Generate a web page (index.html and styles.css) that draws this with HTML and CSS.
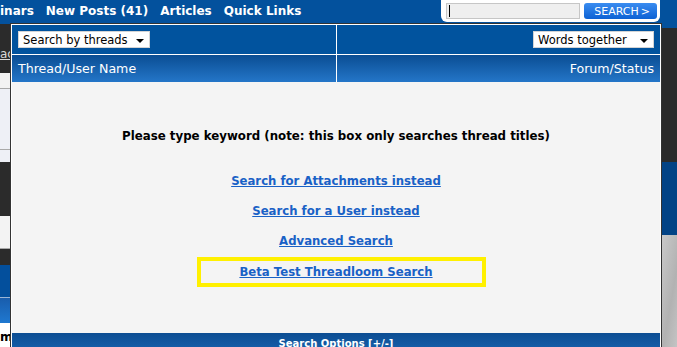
FILE: index.html
```html
<!DOCTYPE html>
<html>
<head>
<meta charset="utf-8">
<link rel="stylesheet" href="styles.css">
</head>
<body>
<header class="topbar">
  <nav class="nav">
    <a class="nav-link">inars</a>
    <a class="nav-link">New Posts (41)</a>
    <a class="nav-link">Articles</a>
    <a class="nav-link">Quick Links</a>
  </nav>
  <form class="quick-search">
    <div class="qs-input"><span class="caret"></span></div>
    <button class="qs-button" type="button"><span>SEARCH</span><span>&gt;</span></button>
  </form>
</header>

<div class="page">
  <div class="strip-left">
    <div class="blk dark tall1"><span class="cut-link">ac</span></div>
    <div class="blk light h15 line"></div>
    <div class="blk pale h60 line"></div>
    <div class="blk pale h12"></div>
    <div class="blk dark h54"></div>
    <div class="blk light h32 line"></div>
    <div class="blk dark h15"></div>
    <div class="blk blue h32 line-light"></div>
    <div class="blk bluegrad h25"></div>
    <div class="blk white h25"><span class="cut-bold">m</span></div>
  </div>
  <div class="page-mid"></div>
  <div class="strip-right">
    <div class="rblk r-blue1"></div>
    <div class="rblk r-dark"></div>
    <div class="rblk r-blue2"></div>
    <div class="rblk r-grey"></div>
  </div>
</div>

<div class="search-popup">
  <div class="popup-grid">
    <div class="cell opt-cell">
      <div class="fake-select sel-left"><span>Search by threads</span><i class="arrow"></i></div>
    </div>
    <div class="cell opt-cell opt-right">
      <div class="fake-select sel-right"><span>Words together</span><i class="arrow"></i></div>
    </div>
    <div class="cell head-cell">Thread/User Name</div>
    <div class="cell head-cell head-right">Forum/Status</div>
    <div class="popup-body">
      <div class="body-inner">
        <p class="hint">Please type keyword (note: this box only searches thread titles)</p>
        <div class="links">
          <a class="plink" href="#">Search for Attachments instead</a>
          <a class="plink" href="#">Search for a User instead</a>
          <a class="plink" href="#">Advanced Search</a>
          <div class="beta-box"><a class="plink" href="#">Beta Test Threadloom Search</a></div>
        </div>
      </div>
      <div class="options-bar">Search Options [+/-]</div>
    </div>
  </div>
</div>
</body>
</html>
```

FILE: styles.css
```css
html, body {
  margin: 0;
  padding: 0;
}
body {
  width: 677px;
  height: 347px;
  overflow: hidden;
  position: relative;
  font-family: "DejaVu Sans", Verdana, sans-serif;
  background: #f4f4f4;
}

/* top navigation */
.topbar {
  height: 24px;
  background: #03519d;
  display: flex;
  justify-content: space-between;
  align-items: flex-start;
}
.nav {
  display: flex;
  gap: 12px;
  padding-top: 4px;
}
.nav-link {
  color: #fff;
  font-weight: bold;
  font-size: 12px;
  line-height: 14px;
  white-space: nowrap;
}
.quick-search {
  margin: 0 17px 0 0;
  width: 219px;
  height: 22px;
  box-sizing: border-box;
  background: #fff;
  border-radius: 0 0 6px 6px;
  display: flex;
  align-items: center;
  gap: 4px;
  padding: 0 3px 0 5px;
}
.qs-input {
  width: 135px;
  height: 16px;
  box-sizing: border-box;
  background: #efefef;
  border: 1px solid #c6c6c6;
  display: flex;
  align-items: center;
  padding-left: 2px;
}
.caret {
  width: 1px;
  height: 12px;
  background: #000;
}
.qs-button {
  width: 73px;
  height: 16px;
  box-sizing: border-box;
  border: 0;
  border-radius: 3px;
  background: linear-gradient(#3a8cf0, #0d62d4);
  color: #fff;
  font-family: "DejaVu Sans", Verdana, sans-serif;
  font-size: 11px;
  display: flex;
  align-items: center;
  justify-content: space-between;
  padding: 0 7px 0 10px;
}

/* background page */
.page {
  display: flex;
  height: 323px;
}
.strip-left {
  width: 10px;
  display: flex;
  flex-direction: column;
  overflow: hidden;
}
.blk { flex: none; box-sizing: border-box; position: relative; overflow: hidden; }
.dark { background: #2b2b2b; }
.light { background: #f3f3f3; }
.pale { background: #eef0f6; }
.blue { background: #034f9c; }
.bluegrad { background: linear-gradient(#195dac, #1f78d0); }
.white { background: #fff; }
.line { border-bottom: 1px solid #a9a9a9; }
.line-light { border-bottom: 1px solid #9bb6d6; }
.tall1 { height: 49px; }
.h15 { height: 16px; }
.h60 { height: 61px; }
.h12 { height: 12px; }
.h54 { height: 54px; }
.h32 { height: 33px; }
.h25 { height: 25px; }
.cut-link {
  display: block;
  margin-top: 24px;
  color: #d8d8d8;
  font-size: 12px;
  line-height: 12px;
  text-decoration: underline;
  white-space: nowrap;
}
.cut-bold {
  display: block;
  margin-top: 8px;
  font-weight: bold;
  font-size: 12px;
  line-height: 12px;
  color: #000;
}
.page-mid { flex: 1; background: #f4f4f4; }
.strip-right {
  width: 15px;
  display: flex;
  flex-direction: column;
}
.rblk { flex: none; }
.r-blue1 { height: 4px; background: #03519d; }
.r-dark { height: 134px; background: #2b2b2b; }
.r-blue2 { height: 73px; background: #034385; }
.r-grey { flex: 1; background: linear-gradient(100deg, #c9c9c9, #b2b2b2 60%, #c4c4c4); }

/* popup overlay */
.search-popup {
  position: absolute;
  left: 10px;
  top: 23px;
  width: 652px;
  height: 340px;
  box-sizing: border-box;
  border: 1px solid #333;
  border-bottom: 0;
  background: #fff;
  padding: 1px 1px 0 1px;
}
.popup-grid {
  display: grid;
  grid-template-columns: 324px 323px;
  grid-template-rows: 29px 27px auto;
  column-gap: 1px;
  row-gap: 1px;
}
.cell {
  display: flex;
  align-items: center;
  padding: 0 6px;
}
.opt-cell { background: #01539e; }
.opt-right, .head-right { justify-content: flex-end; }
.fake-select {
  height: 17px;
  box-sizing: border-box;
  background: #fff;
  border: 1px solid #d4d4d4;
  display: flex;
  align-items: center;
  justify-content: space-between;
  padding: 0 5px 0 4px;
  font-size: 11.5px;
  color: #000;
}
.sel-left { width: 132px; }
.sel-right { width: 121px; }
.arrow {
  width: 0;
  height: 0;
  border-left: 4px solid transparent;
  border-right: 4px solid transparent;
  border-top: 4px solid #000;
  margin-top: 2px;
}
.head-cell {
  background: linear-gradient(#0a4d93, #2476c8);
  color: #fff;
  font-size: 12.6px;
}
.popup-body {
  grid-column: 1 / 3;
  background: #f4f4f4;
  margin-top: -1px;
}
.body-inner {
  height: 251px;
  display: flex;
  flex-direction: column;
  align-items: center;
  padding-top: 45px;
  box-sizing: border-box;
}
.hint {
  margin: 0;
  font-weight: bold;
  font-size: 11.8px;
  line-height: 18px;
  color: #000;
}
.links {
  margin-top: 27px;
  display: flex;
  flex-direction: column;
  align-items: center;
  gap: 12px;
}
.plink {
  font-weight: bold;
  font-size: 11.7px;
  line-height: 18px;
  color: #1961c6;
  text-decoration: underline;
}
.beta-box {
  margin-top: -5px;
  margin-left: 11px;
  width: 289px;
  height: 30px;
  box-sizing: border-box;
  border: 4px solid #fff000;
  display: flex;
  align-items: center;
  justify-content: center;
  padding-right: 11px;
}
.options-bar {
  height: 22px;
  background: linear-gradient(#0c4d92, #1965b2);
  color: #fff;
  font-weight: bold;
  font-size: 10px;
  text-align: center;
  padding-top: 5px;
  box-sizing: border-box;
}
```
